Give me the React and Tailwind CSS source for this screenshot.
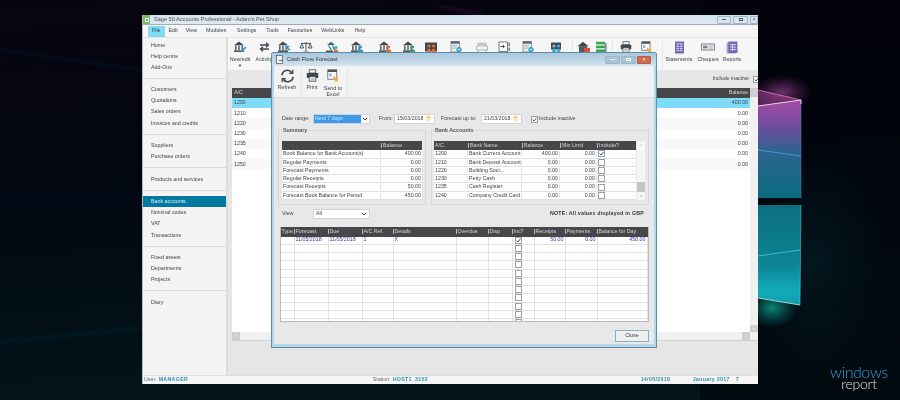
import React from "react";

const sans = { fontFamily: '"Liberation Sans", Arial, sans-serif' };

function Bank({ c = "#3a9bd8", kind = "pen" }) {
  return (
    <svg width="14" height="12" viewBox="0 0 14 12">
      <path d="M1 4.2 6 .6l5 3.6z" fill="#41484f" />
      <rect x="2" y="4.6" width="1.6" height="4.6" fill="#5d646b" />
      <rect x="5.2" y="4.6" width="1.6" height="4.6" fill="#5d646b" />
      <rect x="8.4" y="4.6" width="1.6" height="4.6" fill="#5d646b" />
      <rect x="1" y="9.4" width="10" height="1.5" fill="#41484f" />
      {kind === "pen" && <path d="M8 11l.5-2 3.6-3.6 1.4 1.4L9.9 10.4z" fill={c} />}
      {kind === "arrow" && <path d="M13 5H9v4l1.3-1.2 2 2 1-1-2-2z" fill={c} />}
      {kind === "person" && (
        <g fill={c}>
          <circle cx="10.6" cy="6" r="1.6" />
          <path d="M7.8 11.4c0-2.2 1.2-3.2 2.8-3.2s2.8 1 2.8 3.2z" />
        </g>
      )}
    </svg>
  );
}

const Arrows = () => (
  <svg width="13" height="12" viewBox="0 0 13 12" fill="none" stroke="#41484f" strokeWidth="1.4">
    <path d="M2 4h8M8 1.8 10.4 4 8 6.2" />
    <path d="M11 8H3M5 5.8 2.6 8 5 10.2" />
  </svg>
);
const Scales = () => (
  <svg width="14" height="12" viewBox="0 0 14 12" fill="none" stroke="#41484f" strokeWidth=".9">
    <path d="M7 1v9M4.5 11h5M2 2.4h10M2.8 2.4 1 7h3.6zM11.2 2.4 9.4 7H13z" />
  </svg>
);
const TealBank = () => (
  <svg width="14" height="12" viewBox="0 0 14 12">
    <path d="M2 4 6 .8 10 4z" fill="#41684f" />
    <path d="M3 4.5h1.4L7 9H5.4zM7 4.5h1.4l2 4.5H8.8z" fill="#2f8f98" />
    <circle cx="11" cy="6.5" r="1.5" fill="#3aa7b8" />
    <path d="M8.5 11.6c0-2 1-3 2.5-3s2.5 1 2.5 3z" fill="#e0703a" />
    <rect x="1" y="9.6" width="7" height="1.4" fill="#41484f" />
  </svg>
);
const Car = () => (
  <svg width="14" height="12" viewBox="0 0 14 12" fill="none" stroke="#a9adb1" strokeWidth=".9">
    <path d="M3 5V2.2h8V5M1.5 5h11v4h-11zM3 9v2M11 9v2M4 5V3.4h6V5" />
  </svg>
);
const People = () => (
  <svg width="14" height="12" viewBox="0 0 14 12">
    <rect x="1" y="1.5" width="12" height="9" fill="#41484f" />
    <circle cx="5" cy="5" r="1.6" fill="#e46a3a" />
    <circle cx="9.5" cy="5" r="1.6" fill="#e46a3a" />
    <path d="M3 11c0-2.5 1-3.6 2-3.6S7 8.500 7 11zM7.500 11c0-2.500 1-3.600 2-3.600s2 1.100 2 3.600z" fill="#e46a3a" />
  </svg>
);
const PeopleBlue = () => (
  <svg width="14" height="12" viewBox="0 0 14 12">
    <rect x="2" y="1.500" width="10" height="7" fill="#41484f" />
    <circle cx="5" cy="5" r="1.600" fill="#8fb4c8" />
    <circle cx="9.500" cy="5" r="1.600" fill="#3ab0d8" />
    <path d="M3 11c0-2.500 1-3.600 2-3.600S7 8.500 7 11zM7.500 11c0-2.500 1-3.600 2-3.600s2 1.100 2 3.600z" fill="#3ab0d8" />
  </svg>
);
const Doc = ({ badge = "#3a9bd8" }) => (
  <svg width="13" height="12" viewBox="0 0 13 12">
    <rect x="1" y=".5" width="8.500" height="10.500" fill="#eceded" stroke="#6c7278" strokeWidth=".7" />
    <rect x="1" y=".5" width="8.500" height="2.200" fill="#5d646b" />
    <path d="M2.500 4.500h5M2.500 6h4M2.500 7.500h3" stroke="#9ba0a4" strokeWidth=".6" />
    <circle cx="9" cy="8.500" r="2.600" fill={badge} />
    <path d="M7.500 8.500h3M9 7v3" stroke="#dff2fb" strokeWidth=".5" />
  </svg>
);
const BoxArrow = () => (
  <svg width="13" height="12" viewBox="0 0 13 12" fill="none">
    <rect x="1" y="1" width="8.500" height="9.500" stroke="#5a6066" strokeWidth=".8" fill="#fafafa" />
    <path d="M2.500 5.500h3.500M4.800 4l1.600 1.500L4.800 7" stroke="#2f3438" strokeWidth=".9" />
    <path d="M11.200 1.500v3.500M11.200 6.500v3.500" stroke="#5a6066" strokeWidth="1.200" />
  </svg>
);
const HouseLock = () => (
  <svg width="14" height="12" viewBox="0 0 14 12">
    <path d="M.5 5.200 6 .8l5.500 4.400z" fill="#3e454c" />
    <rect x="2" y="5.200" width="8" height="6" fill="#50575e" />
    <rect x="7" y="6.800" width="6" height="4.800" rx=".6" fill="#d94f30" />
  </svg>
);
const GreenList = () => (
  <svg width="12" height="12" viewBox="0 0 12 12">
    <rect x="1" y=".8" width="9" height="2.600" fill="#3aa655" />
    <rect x="1" y="4.600" width="9" height="2.600" fill="#3aa655" />
    <rect x="1" y="8.400" width="9" height="2.600" fill="#3aa655" />
    <rect x="10.400" y="2" width="1" height="9" fill="#41484f" />
  </svg>
);
const Printer = ({ s = 13 }) => (
  <svg width={s} height={s} viewBox="0 0 13 13">
    <rect x="3.200" y=".8" width="6.600" height="3.200" fill="#f5f5f5" stroke="#3f464c" strokeWidth=".8" />
    <rect x=".8" y="4" width="11.400" height="5" rx=".6" fill="#3f464c" />
    <rect x="3.200" y="7.400" width="6.600" height="4.800" fill="#f5f5f5" stroke="#3f464c" strokeWidth=".8" />
    <path d="M4.500 9.200h4M4.500 10.700h4" stroke="#70767c" strokeWidth=".5" />
  </svg>
);
const Excel = ({ s = 13 }) => (
  <svg width={s} height={s} viewBox="0 0 13 13">
    <rect x=".8" y=".8" width="9" height="9.400" fill="#f7f7f7" stroke="#4d545a" strokeWidth=".7" />
    <rect x=".8" y=".8" width="9" height="2.200" fill="#4d545a" />
    <path d="M2.500 4.600l2 2.800M4.500 4.600l-2 2.800" stroke="#2f6fa8" strokeWidth=".7" />
    <path d="M7 7l2.600 2.600L11 8.200V12.400H6.800L8.200 11 5.800 8.600z" fill="#e9b04a" />
  </svg>
);
const Sheet = () => (
  <svg width="11" height="13" viewBox="0 0 11 13">
    <rect x="1" y=".5" width="9" height="12" fill="#7466b8" />
    <path d="M2.500 3h6M2.500 5.200h6M2.500 7.400h6M2.500 9.600h6" stroke="#e6e2f4" strokeWidth="1" />
    <path d="M5.500 2.500v8" stroke="#7466b8" strokeWidth=".8" />
  </svg>
);
const Cheque = () => (
  <svg width="14" height="12" viewBox="0 0 14 12">
    <rect x=".6" y="3" width="12.800" height="6" fill="#f3f3f3" stroke="#5e646a" strokeWidth=".8" />
    <rect x="2" y="4.600" width="4.600" height="2.800" fill="#7f858a" />
    <path d="M8 5h4M8 7h4" stroke="#7f858a" strokeWidth=".7" />
  </svg>
);
const Report = () => (
  <svg width="12" height="13" viewBox="0 0 12 13">
    <rect x=".6" y="1.500" width="9" height="11" fill="#a79fd8" />
    <rect x="2.400" y=".5" width="9" height="11.500" fill="#7466b8" />
    <path d="M4 3.500h6M4 6h6M4 8.500h6" stroke="#e6e2f4" strokeWidth=".9" />
    <path d="M6.500 3v7" stroke="#e6e2f4" strokeWidth=".7" />
  </svg>
);
const Refresh = () => (
  <svg width="15" height="14" viewBox="0 0 15 14" fill="none" stroke="#3f464c" strokeWidth="1.700">
    <path d="M2 6.300A5.300 5.300 0 0 1 11.800 3.800" />
    <path d="M13 7.700A5.300 5.300 0 0 1 3.200 10.200" />
    <path d="M12.800.8v3.600H9.200" strokeWidth="1.300" />
    <path d="M2.200 13.200V9.600h3.600" strokeWidth="1.300" />
  </svg>
);

const Sep = ({ cls }) => <div className={`h-[30px] w-px shrink-0 bg-[#e6e6e6] ${cls}`} />;

const tools = [
  { cls: "ml-[2px]", icon: <Bank />, label: "New/edit", caret: true },
  { cls: "ml-[4px]", icon: <Arrows />, label: "Activity" },
  { cls: "ml-0", icon: <Bank kind="arrow" c="#2f8fc0" /> },
  { cls: "ml-[2px]", icon: <Scales /> },
  { cls: "ml-[6px]", icon: <TealBank /> },
  { cls: "ml-[5px]", icon: <Bank kind="person" c="#2a9fd8" /> },
  { cls: "ml-[8px]", icon: <Bank kind="person" c="#e4702f" /> },
  { cls: "ml-[4px]", icon: <Bank kind="person" c="#2f9e7a" /> },
  { cls: "ml-[2px]", icon: <People /> },
  { cls: "ml-[5px]", icon: <Doc /> },
  { cls: "ml-[6px]", icon: <Car /> },
  { cls: "ml-[2px]", icon: <BoxArrow /> },
  { cls: "ml-[4px]", icon: <Doc badge="#2aa0d0" /> },
  { cls: "ml-[8px]", icon: <PeopleBlue /> },
  { sep: "ml-[6px]" },
  { cls: "ml-[1px]", icon: <HouseLock /> },
  { cls: "-ml-[3px]", icon: <GreenList /> },
  { sep: "ml-px" },
  { cls: "ml-[3px]", icon: <Printer s={12} /> },
  { cls: "ml-px", icon: <Excel s={12} /> },
  { sep: "ml-[5px]" },
  { cls: "ml-[6px]", icon: <Sheet />, label: "Statements" },
  { cls: "ml-[9px]", icon: <Cheque />, label: "Cheques" },
  { cls: "ml-[4px]", icon: <Report />, label: "Reports" },
];

const menu = [
  ["File", "ml-[5px] px-[4px] bg-[#80dcf6]"],
  ["Edit", "ml-[4px]"],
  ["View", "ml-[8px]"],
  ["Modules", "ml-[9px]"],
  ["Settings", "ml-[11px]"],
  ["Tools", "ml-[10px]"],
  ["Favourites", "ml-[9px]"],
  ["WebLinks", "ml-[9px]"],
  ["Help", "ml-[10px]"],
];

const groups = [
  ["Home", "Help centre", "Add-Ons"],
  ["Customers", "Quotations", "Sales orders", "Invoices and credits"],
  ["Suppliers", "Purchase orders"],
  ["Products and services"],
  ["Bank accounts", "Nominal codes", "VAT", "Transactions"],
  ["Fixed assets", "Departments", "Projects"],
  ["Diary"],
];

const Check = ({ on }) => (
  <div className="flex h-[7px] w-[7px] shrink-0 items-center justify-center border border-[#9a9fa4] bg-white">
    {on && (
      <svg width="5" height="5" viewBox="0 0 5 5">
        <path d="M.6 2.600 2 4 4.500.8" fill="none" stroke="#1f5f9e" strokeWidth="1" />
      </svg>
    )}
  </div>
);

const Caret = () => (
  <svg width="6" height="4" viewBox="0 0 6 4">
    <path d="M.8.8 3 3 5.200.8" fill="none" stroke="#3c4247" strokeWidth="1" />
  </svg>
);

const Cal = () => (
  <svg width="5" height="6" viewBox="0 0 5 6">
    <rect x=".4" y="1" width="4.200" height="4.600" fill="#f8e6b8" />
    <rect x=".4" y=".4" width="4.200" height="1.400" fill="#eebd62" />
  </svg>
);

const Input = ({ v }) => (
  <div className="flex h-[10px] w-[41px] shrink-0 items-center justify-between border border-[#d4d4d4] bg-white pr-[3px] pl-[2px]">
    {v}
    <Cal />
  </div>
);

const Win = ({ cls, x }) => (
  <div className={`flex h-[8px] items-center justify-center rounded-[1px] border border-[#9db7c9] ${cls}`}>{x}</div>
);

const summary = [
  ["Book Balance for Bank Account(s)", "400.00"],
  ["Regular Payments", "0.00"],
  ["Forecast Payments", "0.00"],
  ["Regular Receipts", "0.00"],
  ["Forecast Receipts", "50.00"],
  ["Forecast Book Balance for Period", "450.00"],
];

const banks = [
  ["1200", "Bank Current Account", "400.00", true],
  ["1210", "Bank Deposit Account", "0.00"],
  ["1220", "Building Soci...", "0.00"],
  ["1230", "Petty Cash", "0.00"],
  ["1235", "Cash Register", "0.00"],
  ["1240", "Company Credit Card", "0.00"],
];

const lowerCols = ["w-[14px]", "w-[34px]", "w-[34px]", "w-[31px]", "w-[63px]", "w-[32px]", "w-[24px]", "w-[22px]", "w-[31px]", "w-[32px]", "flex-1"];
const lowerHead = ["Type", "Forecast", "Due", "A/C Ref.", "Details", "Overdue", "Disp", "Inc?", "Receipts", "Payments", "Balance for Day"];

function LowerRow({ vals, on }) {
  return (
    <div className="flex h-[8.250px] border-b border-[#e2e2e2] bg-white">
      {lowerCols.map((w, i) => (
        <div
          key={i}
          className={`${w} flex shrink-0 items-center overflow-hidden border-r border-[#e0e0e0] px-px text-[#3b34b4] ${i >= 8 ? "justify-end" : ""} ${i === 7 ? "justify-start pl-[2px]" : ""}`}
        >
          {i === 7 ? <Check on={on} /> : vals ? vals[i] : ""}
        </div>
      ))}
    </div>
  );
}

function Wallpaper() {
  return (
    <svg className="absolute inset-0" width="900" height="400" viewBox="0 0 900 400">
      <defs>
        <linearGradient id="bg" x1="0" y1="0" x2="0.15" y2="1">
          <stop offset="0" stopColor="#07040e" />
          <stop offset="0.45" stopColor="#020712" />
          <stop offset="1" stopColor="#02141a" />
        </linearGradient>
        <linearGradient id="top" x1="0" y1="0" x2="0" y2="1">
          <stop offset="0" stopColor="#a64aa6" />
          <stop offset="0.28" stopColor="#6c4d9c" />
          <stop offset="0.55" stopColor="#2a648e" />
          <stop offset="1" stopColor="#0a6a80" />
        </linearGradient>
        <linearGradient id="low" x1="0" y1="0" x2="0" y2="1">
          <stop offset="0" stopColor="#0b6e80" />
          <stop offset="0.6" stopColor="#0d8494" />
          <stop offset="0.85" stopColor="#12abb8" />
          <stop offset="1" stopColor="#109eaa" />
        </linearGradient>
        <radialGradient id="pink">
          <stop offset="0" stopColor="#d860c4" stopOpacity=".5" />
          <stop offset="1" stopColor="#a03098" stopOpacity="0" />
        </radialGradient>
        <radialGradient id="teal">
          <stop offset="0" stopColor="#12c8a4" stopOpacity=".65" />
          <stop offset="1" stopColor="#0a8a90" stopOpacity="0" />
        </radialGradient>
        <radialGradient id="haze">
          <stop offset="0" stopColor="#0c4a58" stopOpacity=".22" />
          <stop offset="1" stopColor="#0c4a58" stopOpacity="0" />
        </radialGradient>
        <filter id="soft">
          <feGaussianBlur stdDeviation="2" />
        </filter>
      </defs>
      <rect width="900" height="400" fill="url(#bg)" />
      <rect x="700" y="0" width="200" height="400" fill="#010409" opacity=".6" />
      <ellipse cx="815" cy="260" rx="70" ry="110" fill="url(#haze)" />
      <path d="M0 50 142 70" stroke="#0a2a44" strokeWidth="2" opacity=".45" filter="url(#soft)" />
      <path d="M0 342 142 328" stroke="#0b3640" strokeWidth="2" opacity=".5" filter="url(#soft)" />
      <path d="M440 6 482 15" stroke="#6a2460" strokeWidth="1.500" opacity=".6" filter="url(#soft)" />
      <ellipse cx="782" cy="92" rx="30" ry="17" fill="url(#pink)" />
      <ellipse cx="772" cy="308" rx="26" ry="20" fill="url(#teal)" />
      <path d="M758 90 801 100 758 106z" fill="#b84cae" opacity=".45" />
      <path d="M758 106 801 100V198H758z" fill="url(#top)" />
      <path d="M758 205H801L800 305 758 298z" fill="url(#low)" />
      <path d="M758 150 801 156" stroke="#39aedc" strokeWidth=".8" />
      <path d="M758 256 800 250" stroke="#4ac8dc" strokeWidth=".8" />
      <path d="M758 90 801 100" stroke="#e88ed8" strokeWidth=".7" />
      <path d="M758 106 801 100V104" stroke="#fbe6f8" strokeWidth=".9" fill="none" />
      <path d="M801 104V198" stroke="#5a7fb0" strokeWidth=".5" />
      <path d="M801 205 800 305" stroke="#6fd0d4" strokeWidth=".5" />
      <path d="M800 305 758 298" stroke="#b8f0e8" strokeWidth=".8" />
    </svg>
  );
}

export default function App() {
  return (
    <div className="relative h-[400px] w-[900px] overflow-hidden bg-[#050510] text-[5.300px] leading-none text-[#3a3f44] blur-[0.350px]" style={sans}>
      <Wallpaper />

      {/* Main window */}
      <div className="absolute top-[15px] left-[142px] flex h-[369px] w-[616px] flex-col border-l border-[#b8bcc0] bg-[#f4f4f4]">
        <div className="flex h-[10px] shrink-0 items-center border-b border-[#a4abb0] bg-gradient-to-b from-[#d2e2ed] to-[#dde9f1]">
          <div className="flex h-[9px] w-[7px] items-center justify-center bg-[#7cb86a]">
            <div className="h-[4px] w-[4px] border border-[#e8f4e2]" />
          </div>
          <span className="ml-[4px] text-[5.600px] text-[#4a5258]">Sage 50 Accounts Professional - Adam's Pet Shop</span>
          <div className="ml-auto flex gap-[2px]">
            <Win cls="w-[14px] bg-[#d8e5ee]" x={<div className="h-px w-[4px] bg-[#54606a]" />} />
            <Win cls="w-[15px] bg-[#d8e5ee]" x={<div className="h-[3px] w-[4px] border border-[#54606a]" />} />
            <Win cls="w-[8px] bg-[#d8e5ee]" x={<span className="text-[5px] text-[#54606a]">×</span>} />
          </div>
        </div>

        <div className="flex h-[13px] shrink-0 items-center border-b border-[#e4e4e4] bg-[#f6f6f6]">
          {menu.map(([t, c]) => (
            <span key={t} className={`flex h-[11px] items-center ${c}`}>{t}</span>
          ))}
        </div>

        <div className="flex min-h-0 flex-1">
          <div className="w-[85px] shrink-0 border-r-2 border-[#dcdcdc] bg-[#f4f4f4]">
            {groups.map((g, i) => (
              <div key={i} className={`border-b border-[#dcdcdc] ${i === 0 ? "pt-[2px] pb-[4.200px]" : "pt-[5.400px] pb-[4.800px]"} ${i === 6 ? "border-b-0" : ""}`}>
                {g.map((t) => (
                  <div key={t} className={`flex h-[11.200px] items-center pl-[8px] ${t === "Bank accounts" ? "bg-[#04799f] text-[#dff1f6]" : ""}`}>{t}</div>
                ))}
              </div>
            ))}
          </div>

          <div className="flex min-w-0 flex-1 flex-col">
            <div className="flex h-[32px] shrink-0 items-start overflow-hidden bg-[#f6f6f6] pt-[2px]">
              {tools.map((t, i) =>
                t.sep ? (
                  <Sep key={i} cls={t.sep} />
                ) : (
                  <div key={i} className={`flex w-[20px] shrink-0 flex-col items-center ${t.cls}`}>
                    <div className="flex h-[14px] items-center justify-center">{t.icon}</div>
                    {t.label && <span className="mt-[3px] whitespace-nowrap">{t.label}</span>}
                    {t.caret && <span className="mt-[2px] text-[4px] text-[#222]">▼</span>}
                  </div>
                )
              )}
            </div>

            <div className="flex min-h-0 flex-1 flex-col bg-[#e6e6e6] pl-[4px]">
              <div className="flex h-[18px] shrink-0 items-center justify-end overflow-hidden">
                <span className="mr-[4px] whitespace-nowrap">Include inactive</span>
                <div className="-mr-[2px] shrink-0"><Check on /></div>
              </div>

              <div className="flex h-[253px] shrink-0 flex-col border-b border-[#cfcfcf] bg-white">
                <div className="flex min-h-0 flex-1">
                  <div className="flex min-w-0 flex-1 flex-col">
                    <div className="flex h-[10px] shrink-0 items-center justify-between bg-[#47474a] px-[2px] text-[#d6d6d6]">
                      <span>A/C</span>
                      <span>Balance</span>
                    </div>
                    {[
                      ["1200", "400.00"],
                      ["1210", "0.00"],
                      ["1220", "0.00"],
                      ["1230", "0.00"],
                      ["1235", "0.00"],
                      ["1240", "0.00"],
                      ["1250", "0.00"],
                    ].map(([a, b], i) => (
                      <div key={a} className={`flex h-[10.200px] shrink-0 items-center justify-between px-[2px] ${i === 0 ? "bg-[#7fdcf8]" : i % 2 ? "bg-white" : "bg-[#f7f7f7]"}`}>
                        <span>{a}</span>
                        <span>{b}</span>
                      </div>
                    ))}
                  </div>
                  <div className="flex w-[8px] shrink-0 flex-col justify-between bg-[#f1f1f1]">
                    <div className="flex h-[9px] items-center justify-center bg-[#cfcfcf] text-[4px] text-white">^</div>
                    <div className="flex h-[7px] items-center justify-center bg-[#cfcfcf] text-[4px] text-white">v</div>
                  </div>
                </div>
                <div className="flex h-[8px] shrink-0 justify-between bg-[#f0f0f0] pr-[8px]">
                  <div className="flex w-[8px] items-center justify-center bg-[#cdcdcd] text-white">‹</div>
                  <div className="flex w-[8px] items-center justify-center bg-[#cdcdcd] text-white">›</div>
                </div>
              </div>
            </div>
          </div>
        </div>

        <div className="flex h-[9px] shrink-0 items-center border-t border-[#e0e0e0] bg-[#f6f6f6] text-[#5f686e]">
          <span className="ml-px">User:</span>
          <b className="ml-[2px] w-[214px] font-bold tracking-[0.300px] text-[#2f8fb0]">MANAGER</b>
          <span>Station:</span>
          <b className="ml-[2px] w-[248px] font-bold tracking-[0.300px] text-[#2f8fb0]">HOST1_3152</b>
          <b className="w-[52px] font-bold tracking-[0.300px] text-[#2f8fb0]">14/05/2018</b>
          <b className="w-[43px] font-bold tracking-[0.300px] text-[#2f8fb0]">January 2017</b>
          <b className="font-bold text-[#2f8fb0]">7</b>
        </div>
      </div>

      {/* Cash Flow Forecast dialog */}
      <div className="absolute top-[52px] left-[271px] flex h-[296px] w-[386px] flex-col rounded-t-[2px] border border-[#5f8ea8] bg-[#b9d5e9]">
        <div className="flex h-[13px] shrink-0 items-center bg-gradient-to-b from-[#a9c7dd] to-[#d3e3ee] pr-[5px] pl-[4px]">
          <svg width="8" height="9" viewBox="0 0 8 9">
            <rect x=".5" y=".5" width="6" height="8" fill="#f4f4f4" stroke="#4d545a" strokeWidth=".7" />
            <path d="M3 5.500h4" stroke="#1f8fb0" strokeWidth="1.200" />
          </svg>
          <span className="ml-[3px] text-[5.700px] text-[#2f363c]">Cash Flow Forecast</span>
          <div className="ml-auto flex gap-px">
            <Win cls="w-[15px] bg-[#a8c4d8]" x={<div className="h-px w-[4px] bg-white" />} />
            <Win cls="w-[15px] bg-[#a8c4d8]" x={<div className="h-[3px] w-[5px] border border-white" />} />
            <Win cls="w-[14px] border-[#b65a48] bg-[#d26a52]" x={<span className="text-[5px] text-white">×</span>} />
          </div>
        </div>

        <div className="mx-[2px] flex h-[32px] shrink-0 items-start border-b border-[#dedede] bg-[#f3f3f3] pt-[2px]">
          <div className="flex w-[26px] flex-col items-center">
            <div className="flex h-[15px] items-center"><Refresh /></div>
            <span className="mt-[2px]">Refresh</span>
          </div>
          <Sep cls="ml-[1px]" />
          <div className="ml-[1px] flex w-[18px] flex-col items-center">
            <div className="flex h-[15px] items-center"><Printer /></div>
            <span className="mt-[2px]">Print</span>
          </div>
          <div className="ml-[1px] flex w-[22px] flex-col items-center text-center">
            <div className="flex h-[15px] items-center"><Excel /></div>
            <span className="mt-[2px] leading-[6px]">Send to<br />Excel</span>
          </div>
          <Sep cls="ml-[3px]" />
        </div>

        <div className="mx-[2px] flex min-h-0 flex-1 flex-col bg-[#e8e8e8] pl-[4px]">
          <div className="mt-[16px] flex h-[10px] shrink-0 items-center pl-[4px]">
            <span className="w-[31px] shrink-0">Date range:</span>
            <div className="flex h-[10px] w-[57px] shrink-0 items-center border border-[#d4d4d4] bg-white">
              <div className="flex h-full w-[47px] items-center bg-[#3d9ae8] pl-px text-[#cde6ff]">Next 7 days</div>
              <div className="flex flex-1 justify-center"><Caret /></div>
            </div>
            <span className="ml-[9px] w-[15px] shrink-0">From:</span>
            <Input v="15/03/2018" />
            <span className="ml-[6px] w-[40px] shrink-0">Forecast up to:</span>
            <Input v="21/03/2018" />
            <div className="ml-[9px]"><Check on /></div>
            <span className="ml-px">Include inactive</span>
          </div>

          <div className="mt-[6px] flex h-[75px] shrink-0 gap-[5px]">
            <div className="h-full w-[148px] border border-[#d8d8d8]">
              <div className="-mt-[3px] ml-[3px] w-fit bg-[#e8e8e8] px-px font-bold text-[#555]">Summary</div>
              <div className="mx-[3px] mt-[8px]">
                <div className="flex h-[9px] items-center bg-[#47474a] text-[#d6d6d6]">
                  <div className="w-[99px]" />
                  <div className="border-l border-[#bbb] pl-px">Balance</div>
                </div>
                {summary.map(([a, b]) => (
                  <div key={a} className="flex h-[8.300px] items-center border-b border-[#e0e0e0] bg-white">
                    <div className="w-[99px] truncate border-r border-[#e0e0e0] pl-px">{a}</div>
                    <div className="flex-1 pr-px text-right">{b}</div>
                  </div>
                ))}
              </div>
            </div>

            <div className="h-full w-[218px] border border-[#d8d8d8]">
              <div className="-mt-[3px] ml-[2px] w-fit bg-[#e8e8e8] px-px font-bold text-[#555]">Bank Accounts</div>
              <div className="mt-[8px] ml-[2px] flex">
                <div className="w-[202px]">
                  <div className="flex h-[9px] items-center bg-[#47474a] text-[#d6d6d6]">
                    <div className="w-[34px] pl-px">A/C.</div>
                    <div className="w-[54px] border-l border-[#bbb] pl-px">Bank Name</div>
                    <div className="w-[38px] border-l border-[#bbb] pl-px">Balance</div>
                    <div className="w-[37px] border-l border-[#bbb] pl-px">Min Limit</div>
                    <div className="flex-1 border-l border-[#bbb] pl-px">Include?</div>
                  </div>
                  {banks.map(([a, n, b, on]) => (
                    <div key={a} className="flex h-[8.300px] items-center border-b border-[#e0e0e0] bg-white">
                      <div className="w-[34px] border-r border-[#e0e0e0] pl-px">{a}</div>
                      <div className="w-[54px] truncate border-r border-[#e0e0e0] pl-px">{n}</div>
                      <div className="w-[38px] border-r border-[#e0e0e0] pr-px text-right">{b}</div>
                      <div className="w-[37px] border-r border-[#e0e0e0] pr-px text-right">0.00</div>
                      <div className="pl-px"><Check on={on} /></div>
                    </div>
                  ))}
                </div>
                <div className="ml-px flex w-[8px] flex-col items-center bg-[#f6f6f6]">
                  <div className="flex h-[9px] items-center text-[4px] text-[#aaa]">^</div>
                  <div className="mt-[32px] h-[10px] w-full bg-[#c4c4c4]" />
                  <div className="flex h-[8px] items-center text-[4px] text-[#aaa]">v</div>
                </div>
              </div>
            </div>
          </div>

          <div className="mt-[4px] flex h-[10px] shrink-0 items-center pl-[4px]">
            <span className="w-[31px] shrink-0">View</span>
            <div className="flex h-[10px] w-[57px] shrink-0 items-center justify-between border border-[#d4d4d4] bg-white pr-[2px] pl-[2px]">
              All
              <Caret />
            </div>
            <b className="mr-[10px] ml-auto font-bold tracking-[0.200px] text-[#33383c]">NOTE: All values displayed in GBP</b>
          </div>

          <div className="mt-[8px] ml-[1.500px] w-[369px] shrink-0 overflow-hidden border-x border-b border-[#bbbbbb]">
            <div className="flex h-[9.500px] items-center bg-[#47474a] text-[#d6d6d6]">
              {lowerCols.map((w, i) => (
                <div key={i} className={`${w} shrink-0 border-r border-[#bbb] pl-px ${i === 10 ? "border-r-0" : ""}`}>{lowerHead[i]}</div>
              ))}
            </div>
            <LowerRow vals={["", "11/05/2018", "11/05/2018", "1", "X", "", "", "", "50.00", "0.00", "450.00"]} on />
            {[0, 1, 2, 3, 4, 5, 6, 7, 8].map((i) => (
              <LowerRow key={i} />
            ))}
            <div className="h-[2px] overflow-hidden"><LowerRow /></div>
          </div>

          <div className="mt-[8px] mr-[5px] flex justify-end">
            <div className="flex h-[12px] w-[34px] items-center justify-center border border-[#7fb2ca] bg-[#f0f0f0]">Close</div>
          </div>
        </div>
        <div className="h-[3px] shrink-0" />
      </div>

      {/* Logo */}
      <div className="absolute top-[366px] left-[830px] flex flex-col items-center" style={{ fontFamily: '"Lato", "Liberation Sans", sans-serif' }}>
        <span className="text-[15.500px] leading-[12px] font-light tracking-[-0.200px] text-[#2aa6d8]">windows</span>
        <span className="text-[14px] leading-[12px] font-light tracking-[-0.300px] text-[#e4e4e4]">report</span>
      </div>
    </div>
  );
}
